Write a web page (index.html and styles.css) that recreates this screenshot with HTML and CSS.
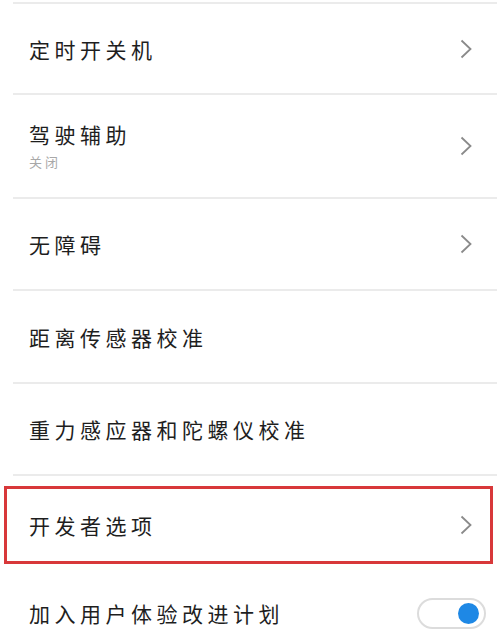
FILE: index.html
```html
<!DOCTYPE html>
<html lang="zh-CN">
<head>
<meta charset="utf-8">
<link rel="stylesheet" href="styles.css">
</head>
<body>
<div class="list">
  <div class="row h91">
    <div class="label"><span class="title">定时开关机</span></div>
    <svg class="chev" width="12" height="20" viewBox="0 0 12 20"><polyline points="1.5,1.5 10.5,10 1.5,18.5" fill="none" stroke="#8a8a8a" stroke-width="1.8"/></svg>
  </div>
  <div class="row h104">
    <div class="label"><span class="title">驾驶辅助</span><span class="sub">关闭</span></div>
    <svg class="chev" width="12" height="20" viewBox="0 0 12 20"><polyline points="1.5,1.5 10.5,10 1.5,18.5" fill="none" stroke="#8a8a8a" stroke-width="1.8"/></svg>
  </div>
  <div class="row h92">
    <div class="label"><span class="title">无障碍</span></div>
    <svg class="chev" width="12" height="20" viewBox="0 0 12 20"><polyline points="1.5,1.5 10.5,10 1.5,18.5" fill="none" stroke="#8a8a8a" stroke-width="1.8"/></svg>
  </div>
  <div class="row h93">
    <div class="label"><span class="title">距离传感器校准</span></div>
  </div>
  <div class="row h92">
    <div class="label"><span class="title">重力感应器和陀螺仪校准</span></div>
  </div>
  <div class="row highlight">
    <div class="label"><span class="title">开发者选项</span></div>
    <svg class="chev" width="12" height="20" viewBox="0 0 12 20"><polyline points="1.5,1.5 10.5,10 1.5,18.5" fill="none" stroke="#8a8a8a" stroke-width="1.8"/></svg>
  </div>
  <div class="row last">
    <div class="label"><span class="title">加入用户体验改进计划</span></div>
    <div class="toggle"><div class="knob"></div></div>
  </div>
</div>
</body>
</html>
```
FILE: styles.css
```css
html, body {
  margin: 0;
  padding: 0;
  background: #ffffff;
  overflow: hidden;
}
body {
  width: 500px;
  height: 640px;
  font-family: "Noto Sans CJK SC", "Noto Sans", sans-serif;
  color: #1e1e1e;
}
.list {
  display: flex;
  flex-direction: column;
  margin-top: 2px;
}
.row {
  box-sizing: border-box;
  display: flex;
  align-items: center;
  justify-content: space-between;
  margin: 0 3px 0 13px;
  padding: 0 25px 0 16px;
  border-bottom: 2px solid #ebebeb;
}
.list > .row:first-child {
  border-top: 2px solid #ebebeb;
  height: 93px;
}
.h91 { height: 91px; }
.h104 { height: 104px; }
.h92 { height: 92px; }
.h93 { height: 93px; }
.label {
  display: flex;
  flex-direction: column;
}
.title {
  font-size: 21px;
  line-height: 26px;
  letter-spacing: 4.5px;
}
.sub {
  margin-top: 6px;
  font-size: 13px;
  line-height: 18px;
  letter-spacing: 3px;
  color: #a8a8a8;
}
.chev {
  display: block;
  flex: none;
}
.highlight {
  height: 78px;
  margin: 10px 7px 0 4px;
  padding: 0 18px 0 22px;
  border: 3px solid #d8383a;
}
.last {
  height: 98px;
  border-bottom: none;
  padding-right: 11px;
}
.toggle {
  box-sizing: border-box;
  width: 69px;
  height: 31px;
  border: 2px solid #dcdcdc;
  border-radius: 16px;
  display: flex;
  align-items: center;
  justify-content: flex-end;
  padding-right: 5px;
  background: #ffffff;
}
.knob {
  width: 21px;
  height: 21px;
  border-radius: 50%;
  background: #1e88e5;
}
```
